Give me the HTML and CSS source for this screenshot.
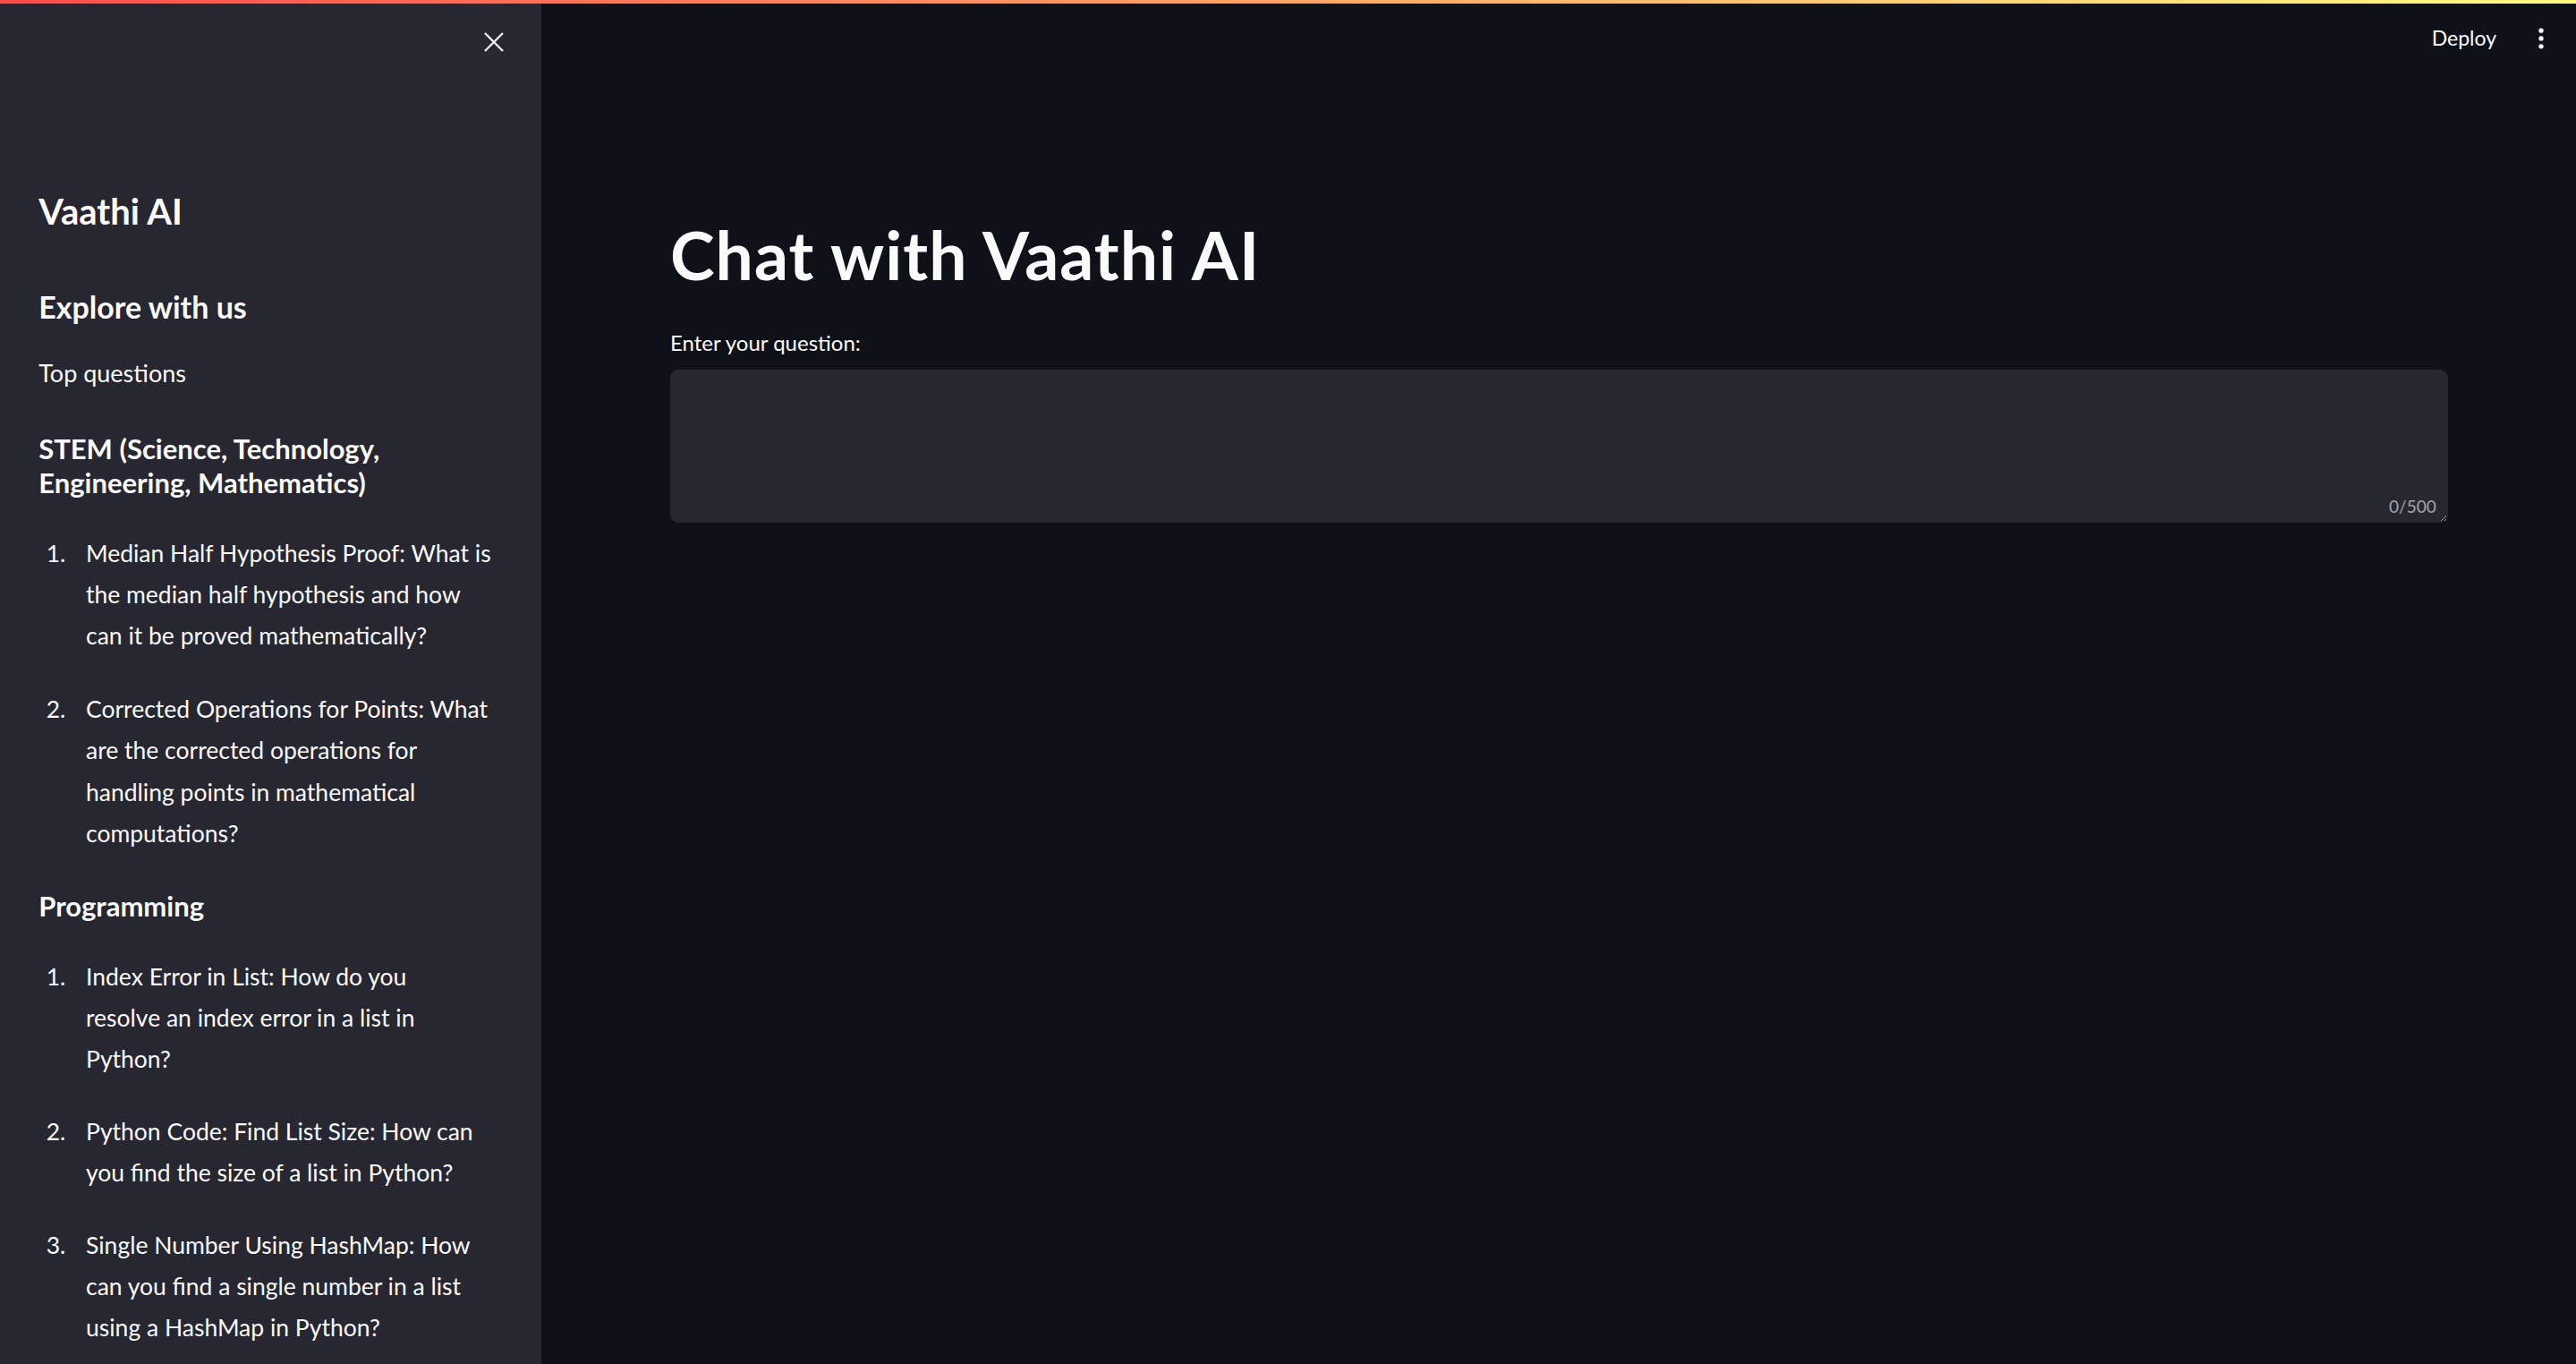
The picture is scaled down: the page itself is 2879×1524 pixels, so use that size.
FILE: index.html
```html
<!DOCTYPE html>
<html lang="en">
<head>
<meta charset="utf-8">
<title>Vaathi AI</title>
<link rel="stylesheet" href="styles.css">
</head>
<body>
<div class="decoration"></div>
<aside class="sidebar">
  <div class="sb-top">
    <svg class="close-icon" width="24" height="24" viewBox="0 0 24 24"><path d="M2 2L22 22M22 2L2 22" stroke="#fafafa" stroke-width="2.2" fill="none"/></svg>
  </div>
  <div class="sb-content">
    <h1 class="sb-title">Vaathi AI</h1>
    <h2 class="sb-h2">Explore with us</h2>
    <p class="sb-p">Top questions</p>
    <h3 class="sb-h3">STEM (Science, Technology,<br>Engineering, Mathematics)</h3>
    <ol class="qlist">
      <li>Median Half Hypothesis Proof: What is<br>the median half hypothesis and how<br>can it be proved mathematically?</li>
      <li>Corrected Operations for Points: What<br>are the corrected operations for<br>handling points in mathematical<br>computations?</li>
    </ol>
    <h3 class="sb-h3 sb-h3-next">Programming</h3>
    <ol class="qlist qlist-prog">
      <li>Index Error in List: How do you<br>resolve an index error in a list in<br>Python?</li>
      <li>Python Code: Find List Size: How can<br>you find the size of a list in Python?</li>
      <li>Single Number Using HashMap: How<br>can you find a single number in a list<br>using a HashMap in Python?</li>
    </ol>
  </div>
</aside>
<main class="main">
  <header class="topbar">
    <span class="deploy">Deploy</span>
    <svg class="kebab" width="6" height="24" viewBox="0 0 6 24"><circle cx="3" cy="3.2" r="2.65" fill="#fafafa"/><circle cx="3" cy="12" r="2.65" fill="#fafafa"/><circle cx="3" cy="20.8" r="2.65" fill="#fafafa"/></svg>
  </header>
  <section class="block">
    <h1 class="page-title">Chat with Vaathi AI</h1>
    <label class="field-label" for="q">Enter your question:</label>
    <div class="textarea-wrap">
      <textarea id="q" class="question"></textarea>
      <span class="counter">0/500</span>
    </div>
  </section>
</main>
</body>
</html>
```
FILE: styles.css
```css
html, body {
  margin: 0;
  padding: 0;
  height: 100%;
}
body {
  background: #0e1117;
  color: #fafafa;
  font-family: Lato, "Noto Sans", sans-serif;
  display: flex;
  height: 100vh;
  overflow: hidden;
  position: relative;
}
.decoration {
  position: absolute;
  top: 0;
  left: 0;
  right: 0;
  height: 4px;
  background: linear-gradient(90deg, #ff4b4b, #fffd80);
  z-index: 5;
}
.sidebar {
  width: 605px;
  flex: 0 0 605px;
  background: #262730;
  display: flex;
  flex-direction: column;
  overflow: hidden;
}
.sb-top {
  height: 93.4px;
  display: flex;
  justify-content: flex-end;
  align-items: center;
  padding-right: 41.3px;
  flex: 0 0 auto;
}
.close-icon {
  display: block;
}
.sb-content {
  padding: 0 43.2px;
  display: flex;
  flex-direction: column;
}
.sb-title {
  margin: 119.1px 0 0;
  font-size: 40px;
  line-height: 48px;
  font-weight: 700;
}
.sb-h2 {
  margin: 63.3px 0 0;
  font-size: 34px;
  line-height: 37.2px;
  font-weight: 700;
}
.sb-p {
  margin: 33.4px 0 0;
  font-size: 27px;
  line-height: 46px;
}
.sb-h3 {
  margin: 41.7px 0 0;
  font-size: 31px;
  line-height: 38.4px;
  font-weight: 700;
}
.sb-h3-next {
  margin-top: 39.5px;
}
.qlist {
  list-style: none;
  counter-reset: q;
  margin: 36.3px 0 0;
  padding: 0;
  display: flex;
  flex-direction: column;
  gap: 36px;
}
.qlist-prog {
  gap: 35px;
}
.qlist li {
  counter-increment: q;
  display: grid;
  grid-template-columns: 52.8px 1fr;
  font-size: 26.5px;
  line-height: 46.08px;
  white-space: nowrap;
}
.qlist li::before {
  content: counter(q) ".";
  padding-left: 8.5px;
}
.main {
  flex: 1 1 auto;
  display: flex;
  flex-direction: column;
  min-width: 0;
}
.topbar {
  height: 84px;
  display: flex;
  justify-content: flex-end;
  align-items: center;
  gap: 47px;
  padding-right: 36px;
  flex: 0 0 auto;
}
.deploy {
  font-size: 23px;
  line-height: 26.4px;
  color: #fafafa;
}
.kebab {
  display: block;
  margin-top: 1px;
}
.block {
  padding: 0 143px 0 144px;
  display: flex;
  flex-direction: column;
}
.page-title {
  margin: 156px 0 0;
  font-size: 75px;
  line-height: 88.8px;
  font-weight: 700;
  letter-spacing: 1px;
}
.field-label {
  margin-top: 40px;
  font-size: 24px;
  line-height: 28px;
}
.textarea-wrap {
  margin-top: 15.9px;
  position: relative;
}
.question {
  display: block;
  width: 100%;
  height: 171px;
  box-sizing: border-box;
  background: #262730;
  border: 1px solid #262730;
  border-radius: 9px;
  color: #fafafa;
  color-scheme: dark;
  resize: vertical;
  outline: none;
  font-family: Lato, sans-serif;
  font-size: 26.5px;
  padding: 14px 18px;
}
.counter {
  position: absolute;
  right: 13.3px;
  bottom: 5.9px;
  font-size: 19px;
  line-height: 22.8px;
  color: rgba(250, 250, 250, 0.6);
}
```
